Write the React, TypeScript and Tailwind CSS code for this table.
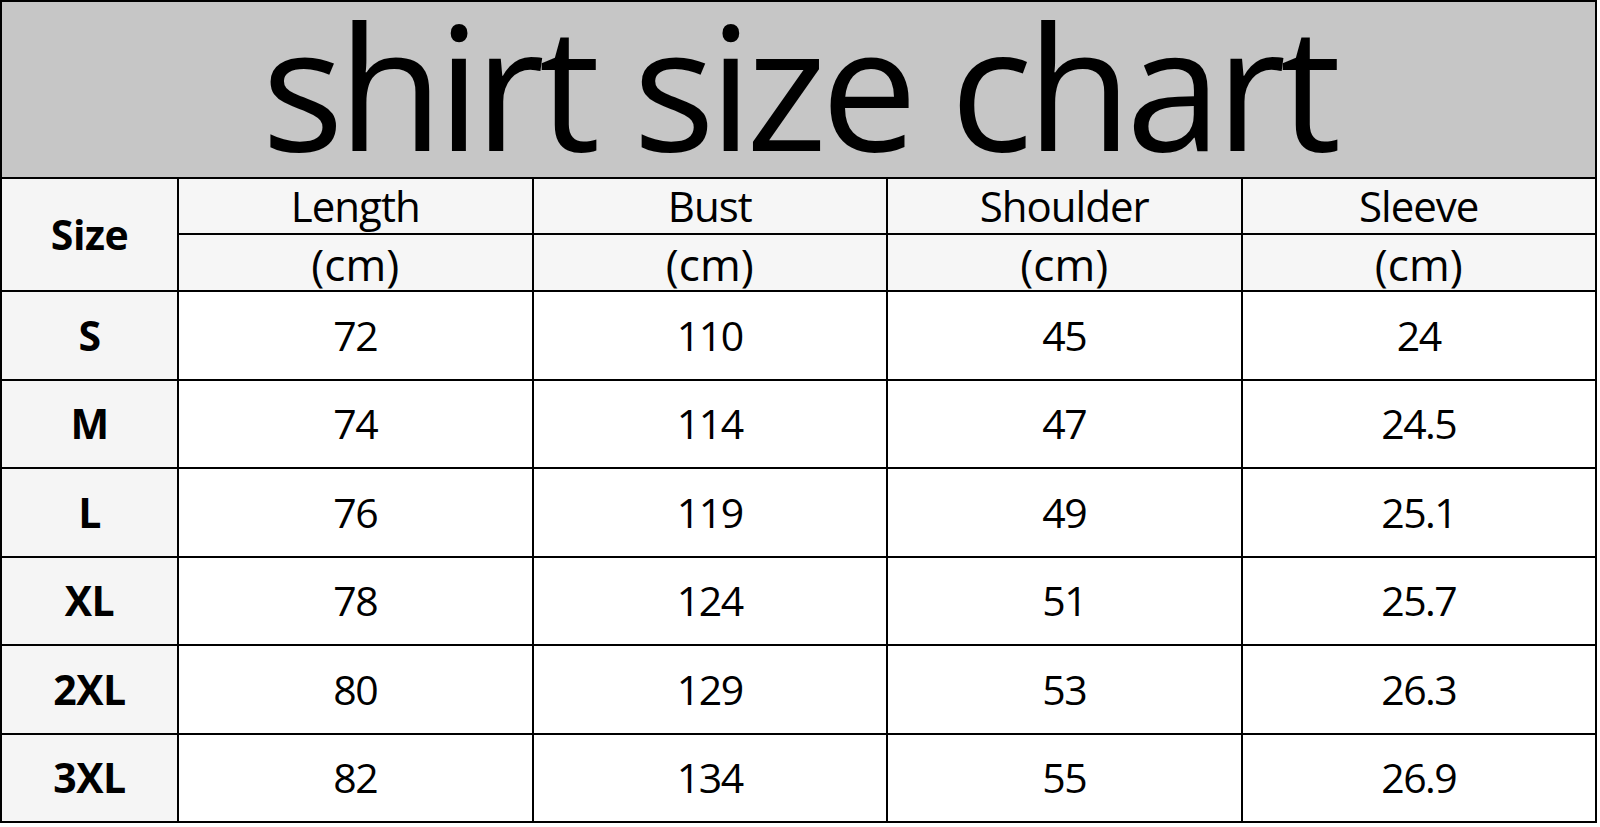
import React from "react";

const cols = ["Length", "Bust", "Shoulder", "Sleeve"];
const rows: [string, string, string, string, string][] = [
  ["S", "72", "110", "45", "24"],
  ["M", "74", "114", "47", "24.5"],
  ["L", "76", "119", "49", "25.1"],
  ["XL", "78", "124", "51", "25.7"],
  ["2XL", "80", "129", "53", "26.3"],
  ["3XL", "82", "134", "55", "26.9"],
];

export default function App() {
  return (
    <div className="w-[1600px] h-[827px] bg-white overflow-hidden" style={{ fontFamily: "'Open Sans', 'Noto Sans', sans-serif" }}>
      <div className="grid w-[1597px] h-[823px] bg-black p-[2px] gap-[2px] grid-cols-[175px_repeat(4,1fr)] grid-rows-[175px_54px_55px_repeat(6,1fr)] text-black">
        <div className="col-span-5 bg-[#c6c6c6] flex justify-center items-center pb-[12px]">
          <span className="text-[172px] leading-none tracking-[-6px]">shirt size chart</span>
        </div>
        <div className="row-span-2 bg-[#f5f5f5] flex items-center justify-center">
          <span className="text-[41px] leading-none font-bold tracking-[-0.5px]">Size</span>
        </div>
        {cols.map((c) => (
          <div key={c} className="bg-[#f6f6f6] flex items-center justify-center">
            <span className="text-[42px] leading-none tracking-[-1px]">{c}</span>
          </div>
        ))}
        {cols.map((c) => (
          <div key={c + "cm"} className="bg-[#f6f6f6] flex items-center justify-center pt-[2px]">
            <span className="text-[44px] leading-none tracking-[0px]">(cm)</span>
          </div>
        ))}
        {rows.map((r) => (
          <React.Fragment key={r[0]}>
            <div className="bg-[#f5f5f5] flex items-center justify-center">
              <span className="text-[41px] leading-none font-bold tracking-[-0.5px]">{r[0]}</span>
            </div>
            {r.slice(1).map((v, i) => (
              <div key={i} className="bg-white flex items-center justify-center">
                <span className="text-[41px] leading-none tracking-[-1.5px]">{v}</span>
              </div>
            ))}
          </React.Fragment>
        ))}
      </div>
    </div>
  );
}
